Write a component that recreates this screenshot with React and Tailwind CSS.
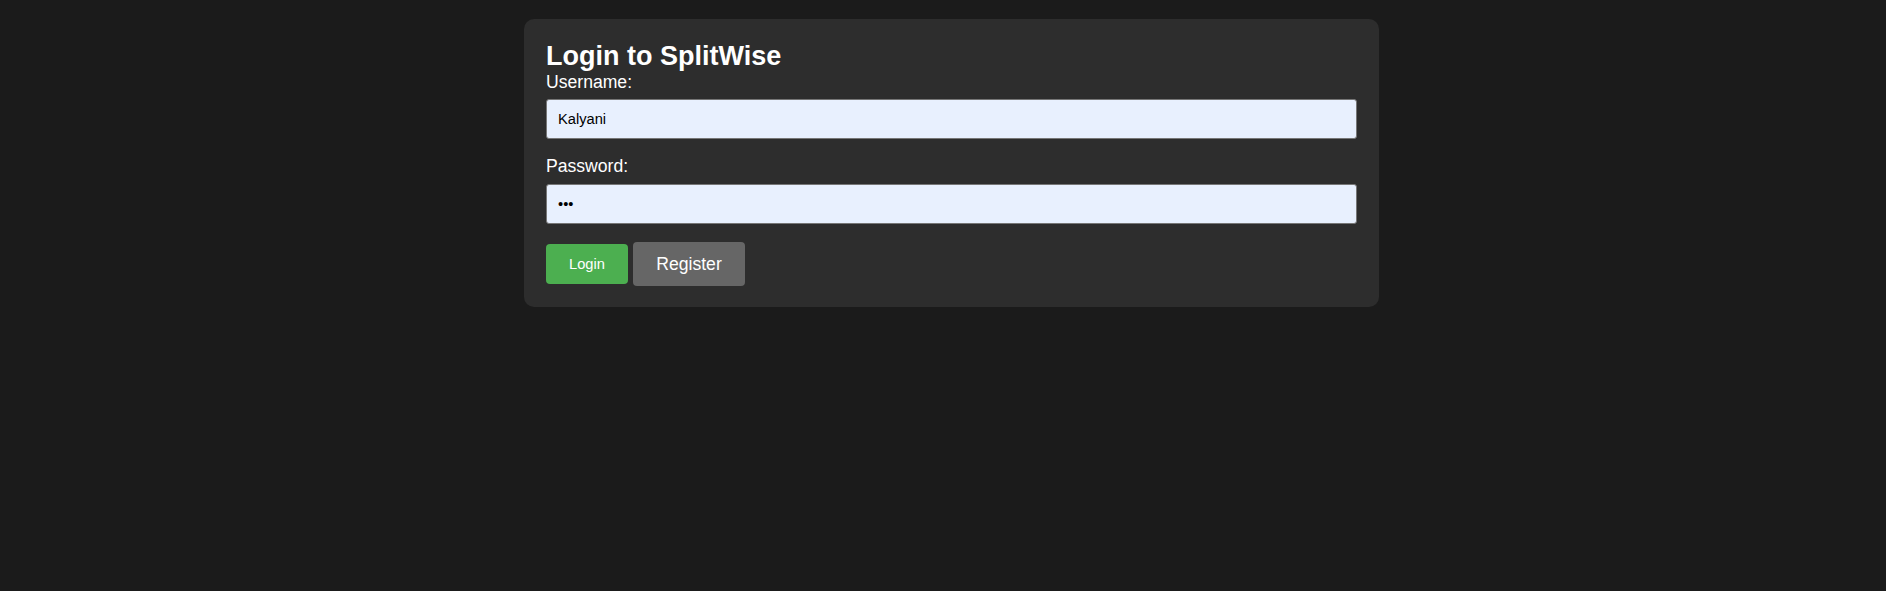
import { useState } from "react";

const LoginPage = () => {
  const [username, setUsername] = useState("Kalyani");
  const [password, setPassword] = useState("abc");

  return (
    <div
      className="min-h-screen bg-[#1b1b1b] flex justify-center items-start pl-[17px] pt-[19px]"
      style={{ fontFamily: '"Liberation Sans", Arial, sans-serif' }}
    >
      {/* ================= CARD ================= */}
      <div className="w-[855px] bg-[#2d2d2d] rounded-[10px] pt-[22px] px-[22px] pb-[21px] flex flex-col text-white">
        <h2 className="text-[27px] leading-[30px] font-bold">Login to SplitWise</h2>

        {/* USERNAME */}
        <label className="mt-[1px] text-[17.6px] leading-[20px]">Username:</label>
        <input
          value={username}
          onChange={(e) => setUsername(e.target.value)}
          className="mt-[7px] h-[40px] w-full bg-[#e8f0fe] border border-[#767676] rounded-[3px] px-[11px] text-[14.67px] text-black outline-none"
        />

        {/* PASSWORD */}
        <label className="mt-[17px] text-[17.6px] leading-[20px]">Password:</label>
        <input
          type="password"
          value={password}
          onChange={(e) => setPassword(e.target.value)}
          className="mt-[8px] h-[40px] w-full bg-[#e8f0fe] border border-[#767676] rounded-[3px] px-[11px] text-[14.67px] text-black outline-none"
        />

        {/* BUTTONS */}
        <div className="mt-[18px] flex items-center gap-[5px]">
          <button className="w-[82px] h-[40px] bg-[#4caf50] rounded-[4px] text-[14.67px] text-white">
            Login
          </button>
          <button className="w-[112px] h-[44px] bg-[#666666] rounded-[4px] text-[17.6px] text-white">
            Register
          </button>
        </div>
      </div>
    </div>
  );
};

export default LoginPage;
